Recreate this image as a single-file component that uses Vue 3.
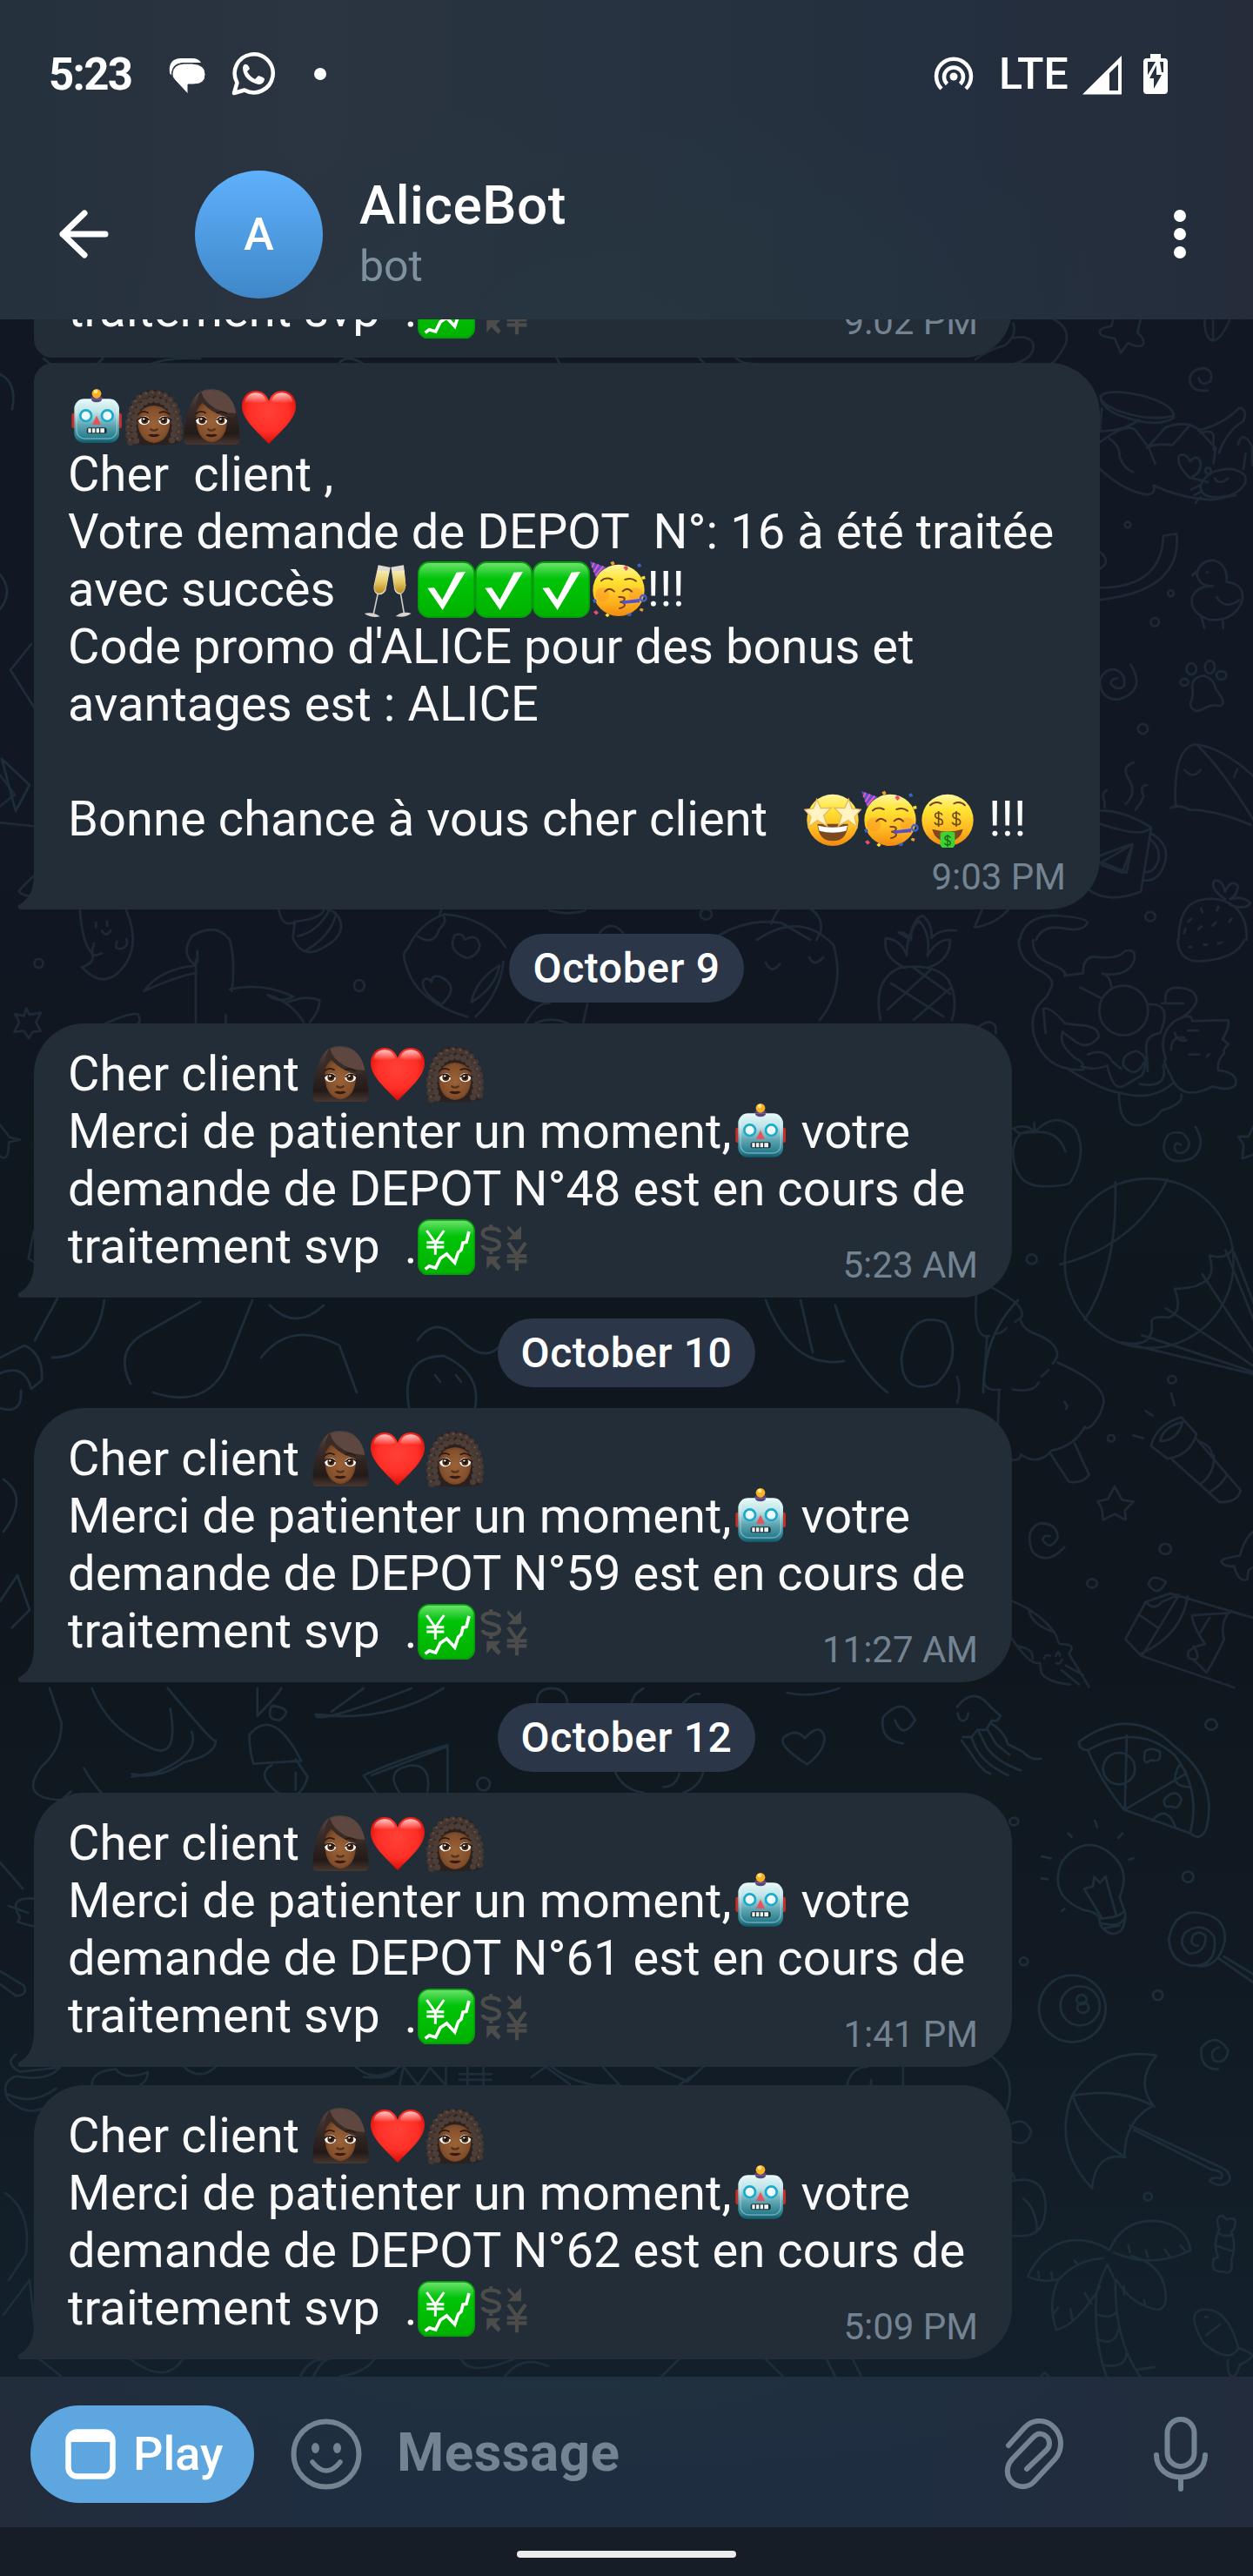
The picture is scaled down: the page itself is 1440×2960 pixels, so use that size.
<script setup>
const emojis = ['robot', 'curly', 'woman', 'heart', 'clink', 'check', 'party', 'star', 'money', 'chart', 'exchange']

// Splits "{name}" tokens out of a line so that they render as emoji glyphs.
const parse = (line) =>
  line
    .split(/(\{\w+\})/)
    .filter((part) => part !== '')
    .map((part) => {
      const name = part.slice(1, -1)
      return emojis.includes(name) ? { emoji: name } : { text: part }
    })

const waiting = (id, number, time, extra = {}) => ({
  id,
  kind: 'message',
  time,
  lines: [
    'Cher client {woman}{heart}{curly}',
    'Merci de patienter un moment,{robot} votre',
    `demande de DEPOT N°${number} est en cours de`,
    'traitement svp  .{chart}{exchange}'
  ].map(parse),
  ...extra
})

const items = [
  // Only the last line of this message is scrolled into view.
  {
    id: 1,
    kind: 'message',
    variant: 'first',
    time: '9:02 PM',
    lines: ['traitement svp  .{chart}{exchange}'].map(parse)
  },
  {
    id: 2,
    kind: 'message',
    variant: 'tall',
    time: '9:03 PM',
    lines: [
      '{robot}{curly}{woman}{heart}',
      'Cher  client ,',
      'Votre demande de DEPOT  N°: 16 à été traitée',
      'avec succès  {clink}{check}{check}{check}{party}!!!',
      "Code promo d'ALICE pour des bonus et",
      'avantages est : ALICE',
      ' ',
      'Bonne chance à vous cher client   {star}{party}{money} !!!'
    ].map(parse)
  },
  { id: 3, kind: 'date', label: 'October 9', variant: 'early' },
  waiting(4, 48, '5:23 AM'),
  { id: 5, kind: 'date', label: 'October 10' },
  waiting(6, 59, '11:27 AM'),
  { id: 7, kind: 'date', label: 'October 12' },
  waiting(8, 61, '1:41 PM'),
  waiting(9, 62, '5:09 PM', { variant: 'follow' })
]
</script>

<template>
  <div class="phone">
    <svg class="sprite" width="0" height="0" aria-hidden="true">
      <defs>
        <linearGradient id="g-green" x1="0" y1="0" x2="0" y2="1">
          <stop offset="0" stop-color="#6be36b" /><stop offset=".22" stop-color="#19c922" /><stop offset=".3" stop-color="#00c408" /><stop offset="1" stop-color="#00b200" />
        </linearGradient>
        <radialGradient id="g-heart" cx=".5" cy=".4" r=".62">
          <stop offset="0" stop-color="#ff4138" /><stop offset=".6" stop-color="#ff2f26" /><stop offset="1" stop-color="#d30a05" />
        </radialGradient>
        <linearGradient id="g-gloss" x1="0" y1="0" x2="0" y2="1">
          <stop offset="0" stop-color="#fff" stop-opacity=".75" /><stop offset="1" stop-color="#fff" stop-opacity="0" />
        </linearGradient>
        <linearGradient id="g-face" x1="0" y1="0" x2="0" y2="1">
          <stop offset="0" stop-color="#fff6a0" /><stop offset=".3" stop-color="#ffe433" /><stop offset=".7" stop-color="#ffb61f" /><stop offset="1" stop-color="#f08a10" />
        </linearGradient>
        <linearGradient id="g-robot" x1="0" y1="0" x2="0" y2="1">
          <stop offset="0" stop-color="#e4f8f8" /><stop offset=".3" stop-color="#bfe3e6" /><stop offset=".6" stop-color="#5fa5b1" /><stop offset=".9" stop-color="#237a8b" /><stop offset="1" stop-color="#115566" />
        </linearGradient>
        <linearGradient id="g-hair" x1="0" y1="0" x2="0" y2="1">
          <stop offset="0" stop-color="#5e4a43" /><stop offset=".35" stop-color="#3a2c29" /><stop offset=".8" stop-color="#231a18" /><stop offset="1" stop-color="#49372f" />
        </linearGradient>
        <radialGradient id="g-skin" cx=".5" cy=".5" r=".6">
          <stop offset="0" stop-color="#9a6238" /><stop offset=".7" stop-color="#84502c" /><stop offset="1" stop-color="#5f371d" />
        </radialGradient>
        <linearGradient id="g-wine" x1="0" y1="0" x2="0" y2="1">
          <stop offset="0" stop-color="#f5eebb" /><stop offset=".5" stop-color="#e6c964" /><stop offset="1" stop-color="#b88a1e" />
        </linearGradient>
      </defs>

      <symbol id="features" viewBox="0 0 198 198">
        <path d="M46 88q14-13 32-3M118 85q18-9 32 3" fill="none" stroke="#2b1913" stroke-width="5" stroke-linecap="round" />
        <ellipse cx="65" cy="112" rx="19" ry="15" fill="#fff" />
        <ellipse cx="134" cy="112" rx="19" ry="15" fill="#fff" />
        <circle cx="67" cy="111" r="12" fill="#4a2a14" /><circle cx="133" cy="111" r="12" fill="#4a2a14" />
        <circle cx="67" cy="111" r="6" fill="#170c07" /><circle cx="133" cy="111" r="6" fill="#170c07" />
        <circle cx="64" cy="106" r="3.5" fill="#fff" /><circle cx="130" cy="106" r="3.5" fill="#fff" />
        <path d="M45 108q17-17 38 2M116 110q20-19 38-2" fill="none" stroke="#1b100c" stroke-width="4" />
        <path d="M88 142q11 8 22 0" fill="none" stroke="#53301a" stroke-width="7" stroke-linecap="round" />
        <path d="M78 162q12-6 21-2q9-4 21 2q-21 14-42 0z" fill="#351a14" />
      </symbol>

      <symbol id="woman" viewBox="0 0 198 198">
        <path d="M98 4C150 4 172 38 184 82c9 34 12 62 13 92 0 16-6 21-20 21H22c-14 0-19-6-18-21C6 120 16 70 40 33 54 12 72 4 98 4z" fill="url(#g-hair)" />
        <path d="M46 92Q46 66 62 46Q112 90 152 98Q156 148 132 172Q100 200 68 172Q44 148 46 92z" fill="url(#g-skin)" />
        <path d="M60 14Q42 44 44 92Q50 66 68 50Q108 94 166 100Q184 100 184 82Q160 8 98 5Q76 5 60 14z" fill="#392b27" />
        <path d="M64 13Q72 46 112 70Q150 88 184 86Q172 12 98 5Q78 5 64 13z" fill="#674f47" opacity=".8" />
        <use href="#features" width="198" height="198" />
      </symbol>

      <symbol id="curly" viewBox="0 0 198 198">
        <path d="M98 5C150 5 185 40 190 110c2 30 6 60-2 76-20 14-160 14-176 0-10-20-6-50-4-76C12 40 50 5 98 5z" fill="#2b211e" />
        <g fill="none" stroke-linecap="round">
          <path d="M18 186Q4 140 18 92Q34 20 98 18Q162 20 180 92Q194 140 180 186" stroke="#453732" stroke-width="25" stroke-dasharray="0 23" />
          <path d="M38 182Q22 140 34 98Q48 42 98 40Q150 42 164 98Q176 140 160 182" stroke="#4c3d37" stroke-width="22" stroke-dasharray="0 21" />
          <path d="M15 178Q2 138 16 90Q32 16 98 14Q160 16 177 90Q192 138 178 178" stroke="#6d5c55" stroke-width="8" stroke-dasharray="0 23" opacity=".65" />
        </g>
        <path d="M44 100Q52 64 98 60Q146 64 154 100Q158 152 130 178Q98 200 68 178Q38 152 44 100z" fill="url(#g-skin)" />
        <use href="#features" width="198" height="198" />
      </symbol>

      <symbol id="heart" viewBox="0 0 198 198">
        <path d="M99 192C60 150 6 108 6 62 6 30 26 9 53 9c22 0 40 14 46 36 6-22 24-36 46-36 27 0 47 21 47 53 0 46-54 88-93 130z" fill="url(#g-heart)" />
        <path d="M16 50C18 28 34 16 54 16c18 0 34 12 36 30-24 8-52 8-74 4zM108 46c2-18 18-30 36-30 20 0 36 12 38 34-22 4-50 4-74-4z" fill="url(#g-gloss)" />
      </symbol>

      <symbol id="robot" viewBox="0 0 198 198">
        <rect x="13" y="86" width="14" height="52" rx="6" fill="#c52d28" /><rect x="172" y="86" width="14" height="52" rx="6" fill="#c52d28" />
        <path d="M78 38q0-14 21-14t21 14q0 12-21 12t-21-12z" fill="#594476" />
        <circle cx="99" cy="19" r="16" fill="#fdb022" /><circle cx="96" cy="12" r="7" fill="#ffe98a" />
        <rect x="22" y="37" width="155" height="152" rx="34" fill="url(#g-robot)" />
        <rect x="30" y="42" width="139" height="132" rx="28" fill="none" stroke="#fff" stroke-opacity=".35" stroke-width="4" />
        <path d="M80 37h38q-2 12-19 12t-19-12z" fill="#594476" />
        <circle cx="62" cy="95" r="19" fill="#effcff" stroke="#19a9cc" stroke-width="8" />
        <circle cx="136" cy="95" r="19" fill="#effcff" stroke="#19a9cc" stroke-width="8" />
        <path d="M99 95l15 31H84z" fill="#e5525b" />
        <rect x="65" y="136" width="69" height="21" rx="8" fill="#1f3036" />
        <path d="M70 139h10v15H70zM84 139h10v15H84zM98 139h10v15H98zM112 139h14v15h-14z" fill="#eef4f2" />
      </symbol>

      <symbol id="check" viewBox="0 0 198 198">
        <rect x="0" y="3" width="198" height="195" rx="40" fill="#069c0b" />
        <rect x="5" y="9" width="188" height="184" rx="35" fill="url(#g-green)" />
        <path d="M34 95l23-1 28 42 49-95 31-2-79 132z" fill="#fff" />
      </symbol>

      <symbol id="chart" viewBox="0 0 198 198">
        <rect x="0" y="6" width="198" height="195" rx="40" fill="#069c0b" />
        <rect x="5" y="11" width="188" height="182" rx="35" fill="url(#g-green)" />
        <path d="M31 45l30 42 30-42M61 86v42M31 86h60M31 102h60" fill="none" stroke="#fff" stroke-width="9" />
        <path d="M26 178l14-11 22 7 16-33 22-15 28 30 12-36 10-8 6-25 12-2 9-37" fill="none" stroke="#fff" stroke-width="11" stroke-linejoin="miter" />
      </symbol>

      <symbol id="exchange" viewBox="0 0 198 198">
        <g fill="#4c4c4b" stroke="#4c4c4b">
          <path d="M84 51Q82 38 54 38Q28 38 26 54Q26 68 54 74Q84 80 84 94Q82 112 54 111Q28 110 26 96M55 25v16M55 108v18" fill="none" stroke-width="13" />
          <path d="M113 28l24 23 22-22v47h-46l17-17-19-20zM40 134h48l-16 17 17 20-9 12-24-25-16 20z" stroke="none" />
          <path d="M114 87l30 42 30-42M144 124v60M110 133h68M110 151h68" fill="none" stroke-width="13" />
        </g>
      </symbol>

      <symbol id="clink" viewBox="0 0 198 198">
        <g fill="none" stroke="#cfcbc7" stroke-width="5" stroke-linecap="round">
          <path d="M60 118L45 188M140 118l12 70" />
        </g>
        <path d="M14 183q28-8 54 10q-30 6-54-10zM122 192q26-20 54-9q-22 16-54 9z" fill="#d9d4d0" />
        <path d="M62 16l42 8-16 80q-12 18-30 13q-14-10-11-31z" fill="#dedbd5" /><path d="M60 34l40 4-14 62q-12 18-28 12q-12-8-9-25z" fill="url(#g-wine)" />
        <path d="M106 23l44-7 7 70q-2 22-17 31q-16 0-22-15z" fill="#dedbd5" /><path d="M110 38l42-4 5 52q-3 20-17 27q-14-2-20-14z" fill="url(#g-wine)" />
      </symbol>

      <symbol id="party" viewBox="0 0 198 198">
        <circle cx="99" cy="103" r="89" fill="url(#g-face)" />
        <circle cx="43" cy="118" r="24" fill="#f98528" opacity=".35" /><circle cx="158" cy="118" r="24" fill="#f98528" opacity=".35" />
        <path d="M0 3l59 22q-25 9-38 35z" fill="#5d4fd0" /><path d="M14 8l-7 16M30 14L13 40M46 20L19 53" stroke="#e85bb5" stroke-width="6" />
        <path d="M39 70q15-14 38-4M121 66q22-8 38 5M52 107q14-18 32 0M113 106q16-15 31 1M100 126q24-2 18 12-10 6-15 5 22 2 15 15-7 7-16 7" fill="none" stroke="#75421c" stroke-width="6" stroke-linecap="round" />
        <path d="M106 140l66-8v13l-56 4z" fill="#5351cd" /><circle cx="184" cy="130" r="10" fill="none" stroke="#4361cf" stroke-width="7" />
        <g stroke-width="1"><path d="M70 7l11-5 5 10-10 5zM174 164l11 3-4 10-11-5z" fill="#ed9e34" /><path d="M115 24l10-6 8 9-9 9zM12 178l10-6 8 9-9 7z" fill="#e74c72" /><path d="M162 14l11-4 5 10-11 4zM9 136l10-3 5 9-10 6zM130 184l14-3-2 10-13 1z" fill="#3763c4" /><path d="M177 56l12-3 2 11-12 2zM52 188l7-6 9 6-8 8z" fill="#ffe03b" /></g>
      </symbol>

      <symbol id="star" viewBox="0 0 198 198">
        <circle cx="99" cy="103" r="89" fill="url(#g-face)" />
        <path d="M46 116h106q-4 59-53 59t-53-59z" fill="#7d4820" /><path d="M48 122q50 12 102 0l-5 18q-46 12-92 0z" fill="#fff" />
        <path d="M44 31l14 31 36-1-26 26 12 37-34-20-31 23 9-35-22-25 31-4z" fill="#fff3c3" stroke="#e9b85c" stroke-width="4" />
        <path d="M154 31l-14 31-36-1 26 26-12 37 34-20 31 23-9-35 22-25-31-4z" fill="#fff3c3" stroke="#e9b85c" stroke-width="4" />
      </symbol>

      <symbol id="money" viewBox="0 0 198 198">
        <circle cx="99" cy="103" r="89" fill="url(#g-face)" />
        <path d="M39 52q17-16 38-6M121 46q22-10 38 6" fill="none" stroke="#75421c" stroke-width="6" stroke-linecap="round" />
        <path d="M46 134q54 16 106 0q-10 42-53 42t-53-42z" fill="#7d4820" />
        <path d="M74 146q25-8 50 0v40q0 16-25 16t-25-16z" fill="#3dd332" />
        <g fill="none" stroke="#6d4a18" stroke-width="5">
          <path d="M81 86q-4-8-13-8-12 0-12 9 0 8 12 11 14 3 14 12 0 9-14 9-11 0-14-9M68 72v54" />
          <path d="M142 86q-4-8-13-8-12 0-12 9 0 8 12 11 14 3 14 12 0 9-14 9-11 0-14-9M129 72v54" />
          <path d="M109 164q-3-6-10-6-9 0-9 7 0 6 9 8 10 2 10 9 0 7-10 7-8 0-10-7M99 153v42" stroke="#1d6516" stroke-width="4" />
        </g>
      </symbol>
    </svg>

    <header class="header">
      <div class="status">
        <span class="clock">5:23</span>
        <svg class="s-chat" width="44" height="44" viewBox="0 0 44 44"><path d="M2 18Q0 2 14 1h14q7 0 10 5H17Q4 7 4 20q-1 0-2-2z" fill="#fff" /><path d="M18 7h10q15 1 15 12.500T29 31h-6v11L8 26Q4 22 5 18 6 8 18 7z" fill="#fff" stroke="#29343f" stroke-width="1" /></svg>
        <svg class="s-wa" width="50" height="50" viewBox="0 0 50 50"><path d="M3 47l3.500-12A22 22 0 1 1 15 43.500z" fill="none" stroke="#fff" stroke-width="4.500" stroke-linejoin="round" /><path d="M17 14q-3-1-4 4 1 15 18 19 6 0 7-6 0-2-7-4l-4 4q-6-3-9-9l3-3q-2-5-4-5z" fill="#fff" /></svg>
        <span class="s-dot"></span>
        <span class="grow"></span>
        <svg class="s-hot" width="46" height="40" viewBox="0 0 46 40"><circle cx="23" cy="23" r="4.500" fill="#fff" /><path d="M15.500 31.500a11 11 0 1 1 15 0M9 37a20 20 0 1 1 28 0" fill="none" stroke="#fff" stroke-width="4.500" /></svg>
        <span class="lte">LTE</span>
        <svg class="s-sig" width="45" height="45" viewBox="0 0 45 45"><path d="M0 44.500L45 0v44.500zM31 40h10V10L31 20z" fill="#fff" fill-rule="evenodd" /></svg>
        <svg class="s-bat" width="28" height="46" viewBox="0 0 28 46"><path d="M8 0h12v5h4q4 0 4 4v33q0 4-4 4H4q-4 0-4-4V9q0-4 4-4h4z" fill="#fff" /><path d="M5 9h9L5 24zM19 9h4v12h-2zM15 13v11h6l-9 16V28H7z" fill="#25303d" /></svg>
      </div>
      <div class="titlebar">
        <svg class="back" width="58" height="56" viewBox="0 0 58 56"><path d="M54 28H5M30 4L5 28l25 24" fill="none" stroke="#fff" stroke-width="7" stroke-linecap="round" stroke-linejoin="round" /></svg>
        <div class="avatar">A</div>
        <div class="who">
          <div class="name">AliceBot</div>
          <div class="sub">bot</div>
        </div>
        <div class="dots"><i></i><i></i><i></i></div>
      </div>
    </header>

    <main class="chat">
      <svg class="doodles" width="1440" height="2364" viewBox="0 367 1440 2364">
        <!-- stars, crab, chick, paw and mug beside the tall message -->
        <g transform="translate(720 0) scale(.4592 .3333)">
          <path d="M1068 1100q45 30 30 90-20 50-38 70M968 1115q10 40-20 75-50 20-75 50M968 1165q40-10 50 20 5 50-50 70M1218 1100l-4 25q-30 5-30 20t38 22l15 50 18-35q32 20 38 5t-14-40l8-50M1447 1102q0 70 22 72 20-5 40-70M1468 1175v-70" />
        </g>
        <g transform="translate(700 400) scale(.4719 .4337)">
          <path d="M1458 112q-38 6-44-25 0-32 35-34 25 8 15 35-20 15-28-8M1375 185q-45 30-140-10-48-30-35-50 20-18 95 0 85 25 80 60zM1372 180q-60 15-135-15-42-20-40-38M1200 160l-5 60q60 0 95-30M1195 250q60-50 85-35l35 50 15 42M1218 240q25 15 26 50 10 30 32 38M1310 265l45-55q50-20 80 5l42 50-5 40M1312 262q22-10 60-5l40-50M1195 320q60 60 115 68 22-2 16-24 70 35 140 38l60-12M1435 218q60-15 100-60 20 5 10 35-40 25-60 85M1440 225q35-12 32 15v30" />
          <path d="M1440 365q15-45 75-45 45 10 33 40-20 35-70 35-38 0-38-30zM1475 345q10 20 32 0M1415 345q-35-35-27-60 15-10 27 15 15-20 25 0 5 30-25 45zM1532 255q10-40 34 5v50M1418 375l20-12M1425 390l20-12M1440 395l-12 15M1420 345l38 10M1545 320l5-40M1270 468a7 8 0 1 1-14 0 7 8 0 1 1 14 0zM1466 325a7 8 0 1 1-14 0 7 8 0 1 1 14 0z" />
          <path d="M1195 540q30 25 0 45M1195 635q150 0 155-138l32-5q15 150-187 175M1375 650a7 8 0 1 1-14 0 7 8 0 1 1 14 0zM1339 726a10 11 0 1 1-20 0 10 11 0 1 1 20 0z" />
          <path d="M1420 602l12-8q10-32 40-32 35 10 32 58 45 5 38 50-20 55-80 50-50-20-42-60 12-30 50-30-40 0-38-40zM1480 660q20 35 55 8M1442 712l8 30M1495 722v20M1456 594h2" />
          <path d="M1270 838q40 70-30 93-45 0-45-50 10-30 35-30 30 10 24 44-15 15-32-5 0-15 15-15M1420 900q0-30 30-32 25 10 27 35 30 40 10 45-20-5-35 5-30 20-37-10 10-20 5-43zM1411 885a10 9 0 1 1-20 0 10 9 0 1 1 20 0zM1430 850a12 15 0 1 1-24 0 12 15 0 1 1 24 0zM1475 845a12 17 0 1 1-24 0 12 17 0 1 1 24 0zM1503 867a12 11 0 1 1-24 0 12 11 0 1 1 24 0zM1312 1009a12 13 0 1 1-24 0 12 13 0 1 1 24 0z" />
          <path d="M1380 1215q-8-150 45-165 70 5 160 100M1430 1050q60 60 145 210M1402 1118q20 25 38 0M1530 1115l-8 22M1368 1218q20-10 45 5 60 0 150 40M1278 1098q-30 10-15 40 25 40-5 70M1310 1158q-20 0-8 30-8 20-20 35M1212 1172q-15 5-5 30v15M1195 1225q60 0 125 45-20 30-125-10M1320 1275l-25 165q-80 35-130-8M1318 1285q50 30 35 80-15 50-50 45M1315 1300q30 20 22 60-10 30-30 28M1195 1365l80-50-15 75-60-28M1200 1370l50 20 25-75M1195 1345l75-30" />
          <path d="M1387 1568q0-90 50-105 50-15 90 20 30 35 25 85M1500 1460q-40-30-25-50 20 0 25 30 15-35 32-15-5 30-20 35 30-10 50 10-10 20-50 5M1410 1520l8-8M1445 1495l-4-10M1480 1490l4-10M1400 1550l4-12M1435 1540l8-8M1470 1530l8-8M1510 1520l6-8M1330 1506a12 12 0 1 1-24 0 12 12 0 1 1 24 0zM250 1500a14 14 0 1 1-28 0 14 14 0 1 1 28 0zM250 1568q80-60 170-45l70 45M395 1525q20-60 60-60 70 30 60 80l-10 23M735 1568l-30-20q20-2 30 20 0-50 28-65 25 20 22 60 20-25 60-20M890 1534l20-50M895 1534q50-10 80-50M1000 1568q10-60 80-65 85 5 85 20-10 25-60 14-50-10-65 31" />
        </g>
        <!-- pineapple and cow between the tall message and the next one -->
        <g>
          <path d="M1012 1172q-10-46 22-60 40-6 56 14 12 24 4 46M1024 1130l60 38M1050 1112l42 30M1020 1160l50-46M1050 1172l44-38M1040 1112q-26-12-22-34 18 2 24 20 0-26 14-40 14 14 10 40 12-20 26-18 0 24-26 32M870 1080q50-34 88 6 14 50-16 86M880 1106q6 14 16 2M930 1100q6 12 16 0" />
        </g>
        <!-- ghost, goose and balloon below the tall message -->
        <g transform="translate(0 840) scale(.4592 .4209)">
          <path d="M0 120l38 55M0 205l35-30M0 250l84 10M85 395q-20 20-38 42 10 15 38 14M200 487q5 90 30 120 10 25-25 38 60 70 110-10 35-60 0-148M255 545q10 20 22 0M240 535v-12M268 532v-12M235 580q-10 35 5 32l15-5M293 575q-10 25 15 18 15-10 8-25M698 490q10 50 40 30l-5 45q20 50 60 35 80-40 55-90-10-20-30-23M740 520q70-10 70-33M745 560q50-10 80-73M765 600q60-40 75-95" />
          <path d="M490 640q-40-30-10-80 60-40 95 10 15 60 5 140M490 640q-90 10-130 70 80-40 132-50M490 625v170M494 600v30M575 705q80-20 160 20-40 20-65-5M670 720q60 20 90 75M720 740q50-20 80-5 0 30-25 60M565 775v25M265 798q60-30 80-25 10 20 0 25M108 634a11 12 0 1 1-22 0 11 12 0 1 1 22 0zM912 695a13 15 0 1 1-26 0 13 15 0 1 1 26 0zM66 757l8 18 28-6-12 26 12 24-20 2-10 18-12-20-24 2 12-26-10-22 22 5z" />
          <path d="M1170 780q-130-40-155-145-10-30 5-40 25-65 90-95 110 10 155 90M1045 560q40 30 55-20 20-20 10-35M1168 620q-50-20-30-62 20-10 25 12 30-20 38 15-5 30-33 35zM1060 680q-10 30 45 67 50-50-5-77-20-5-20 15-10-15-20-5zM1180 740q10-60 70-100-10 60-70 100zM1190 780q60-60 70-150M1100 500l5-13M0 1075l25 35 25 5-28 8q0 60-25 35M85 1365l-14 75 14 10M1315 798q30-60 60-55M1340 798q40-20 80 0M1470 745l-10 50M1500 552q30-40 60 0M1375 490q45 15 90 0" />
        </g>
        <!-- cat, balloon, tree, torch -->
        <g transform="translate(1100 1080) scale(.3333 .5485)">
          <path d="M212 0q0 40 60 60 70 20 52 40-15 20-20 22-60 30-38 80 40 75 170 70 5-15-30-25-60-30-42-55M305 195l-8-50q20-8 75 30l70 5q50 5 45 25-35 25-75 10l-45-20M262 0q-5 35 60 50 60 15 48 25l65-5q-5-30 35-35 80 8 110-12 40-5 30 20-20 35-110 28M510 72q20 10 22 28M658 148a84 52 0 1 1-168 0 84 52 0 1 1 168 0zM425 100l72 22M385 272q120 45 175 48 110 20 185-20M558 322q0 70 70 66 50-5 75-30 80-15 70-34M655 135q90-5 45 60-50 5-48 30l5 50M720 250q-30-50 30-80 60-20 60 0l125-2q5 15-20 40l20 10-15 12 0 8q-25 15-20 35 70 5 60 30-15 15-80 4-110 35-145-25-20-20-20-30M720 133q-10-30 30-33 80 0 75 30-15 20-55 35M705 133h75M428 265q50 10 90-2 20 60 65 40l55-20q30-40-20-50-50 5-45 30 40 30 70-5M450 240q60-15 85 15l30 15M738 230q0-30 45-25M750 195q10 20 40 15M800 240h35M795 190h35M860 245l10-6M710 262q20 50-80 40" />
          <path d="M268 403q-70-10-76 45 10 70 105 68 90 0 95-10 60-60 15-110-70-40-139 7zM268 403q80-5 105 40M268 403q-30-20-75-8l20 10 55-2M265 383l3 20M822 392q40 40-10 65-90 20-100-22 5-40 65-30 40 20 10 38-30 10-38-8 5-15 22-5M1020 392l-15 20h-35l18 18-5 28 37-8" />
          <path d="M953 675c0 100-130 180-291 180S371 775 371 675 500 500 662 500s291 75 291 175zM545 508q10 180-105 288M355 680q260-40 370-178M565 843q120 15 105-45 5-10 60-7 50-10 20-60 70-2 85-10 60-10 35-60 60 10 80-15M637 828l400 80M720 772l300 120M845 700l180 165M925 650l100 150M955 655l70 110M565 843l460 67M760 0q5 45 75 45 130-5 155-45M800 15h8M850 10h12M900 8l12-3" />
          <path d="M66 745q-10 80 30 85h15M130 825q25 0 40-12M115 727q130 40 105 65l-20 8M220 798q5 15 40 25 90 20 85 50l-15 15M345 885q170 45 160 85-10 25-25 35-20 20-40 18M103 832l-10 90q0 25 55 20M192 942q70 8 90-15M290 915l25-14M145 945l-5 70M190 1090q30 0 30-12 60 25 105-8 80-10 115-50M320 1075l65 60q50 5 70-15l-50-65M370 968q15 10 5 15M275 669a18 10 0 1 1-36 0 18 10 0 1 1 36 0zM755 921a14 8 0 1 1-28 0 14 8 0 1 1 28 0zM543 1044a12 7 0 1 1-24 0 12 7 0 1 1 24 0zM738 1276a20 11 0 1 1-40 0 20 11 0 1 1 40 0zM482 1348a17 9 0 1 1-34 0 17 9 0 1 1 34 0zM0 915q15 25 0 55M75 182q40-20 58 0v14" />
          <path d="M668 1060q20-45 105-60l52 35q-20 45-100 52zM700 1050q10-30 78-40-20 40-78 40zM740 1088l165 90q65 0 72-25l-155-110M840 1140q50-25 45-60M875 1155q40-15 55-35M830 1050q50 10 48 30M738 950l12 25M650 987l25 10M607 1038l35 6" />
          <path d="M543 1145l25 28 40 4-30 18 3 20-38-12-40 12-3-22-15-17 35-5zM370 1272q-60 40-110 10-30-45 25-60 60 0 62 30-25 30-52 5 5-12 25-8M1020 1240q-30 15-45 50-60 5-65 12 10 12 45 10 15 35 45 28l5-20 15-5M190 1385q100 25 150 70 10 20 15 20 60 0 30 20l70 70M190 1465q60 55 95 50l5 20q20 20 100 25M245 1400q10 35 90 50M210 1480q55 5 50 25M360 1530l60 30M375 1520l60 20M300 1505q5-10 20-5M340 1500q10-15 15 0M342 1515q10 5 20-8M580 1465l70-78 85-18 300 54M580 1465l55 35 320 66M650 1387q30 20 55 0l60-15-125 125M795 1375q-20 80-160 120M630 1415l60 25M660 1350q10-25 60-5-30 35-60 5zM940 1410l-130 5q0 20 45 60-75 10-55 30 50 10 15-25M945 1405q-40 20-25 60-20 30-60 70-30-20-50-28M870 1420l-30 30" />
        </g>
        <!-- pizza, bulb, umbrella, palm -->
        <g class="low" transform="translate(1100 1900) scale(.3333 .5485)">
          <path d="M0 112q50-40 100-10 30 20 50 28-10 15-30 10l-20 20-30 0-20 15h-30M115 145q50 20 60 45l50 15q30 20 65 15M105 160l30 30 45 22M75 165l30 35q40 30 115 45M50 175q20 50 125 80M15 182l30 25q40 40 70 45M38 125a18 16 0 1 1-36 0" />
          <path d="M420 185q180-80 330 10 150 70 110 170-20 30-55 12l-230-50q-80-60-125-125-30 0-30-17zM450 203q170-60 300 10 90 70 55 160M585 172l-7 155 210-75M613 241a55 33 0 1 1-110 0 55 33 0 1 1 110 0zM790 250q-20-20-25-15-40 45 40 45M672 350q50-35 80 12M648 205q20-10 50 0 10 25-30 18-30 15-20-18zM715 305q40-25 58 0-10 25-35 15-30 5-23-15zM896 149a20 11 0 1 1-40 0 20 11 0 1 1 40 0zM815 468a19 11 0 1 1-38 0 19 11 0 1 1 38 0zM211 352a15 8 0 1 1-30 0 15 8 0 1 1 30 0zM244 645a14 8 0 1 1-28 0 14 8 0 1 1 28 0zM709 716a17 10 0 1 1-34 0 17 10 0 1 1 34 0zM672 1138a14 8 0 1 1-28 0 14 8 0 1 1 28 0z" />
          <path d="M490 555q-10-15-50-17-130-30-78-103 80-60 168-15 70 35 30 90l20 35q0 45-50 42-40-10-40-32zM490 555q70 0 88-17M497 565q60 10 80-10M510 575l50-5M500 555l-62-62 30-5 5-20 20 12 18-13 38 82M475 350l8 14M383 377l12 7M570 377l-14 9M292 425l32 4M290 471l22 2M593 432l14-3M360 540l10-5" />
          <path d="M830 612q-30 0-18-20 20-15 45 0 0 35-55 37-45-20-15-45 60-25 100 10 10 55-60 60-90 0-97-55 15-55 90-57 110 5 103 60-20 55-90 53M905 640l130 55M920 635l110 40M512 744a115 70 0 1 1-230 0 115 70 0 1 1 230 0zM492 738a68 41 0 1 1-136 0 68 41 0 1 1 136 0zM446 725a17 10 0 1 1-34 0 17 10 0 1 1 34 0zM454 742a20 11 0 1 1-40 0 20 11 0 1 1 40 0zM900 871q-65 0-58-45 50-35 92 5-5 30-48 22-20-20 15-28" />
          <path d="M395 927q110-105 292-85-75 55-10 105-100 30-100 108-100-10-112 65-135-85-70-193zM395 927q160-20 285 22M400 930q50 80 180 125M595 988l310 87q40 10 35 28-25 20-70 2 10-10 40-5 15-15-30-18l-270-84" />
          <path d="M120 845q90 40 50 112M190 985q40-15 65 15-10 35-65 22M190 1105q110-15 115 50 0 65-80 65h-35M228 1142q45 20 48 68M190 1088l8 12" />
          <path d="M525 1250q-60-25-140-20-90 10-142 75 50 15 110 5 60-40 150-43M350 1310q-40 50-8 107 70-10 150-90M525 1250q50-70 175-60 90 10 105 60-130 40-265 5M600 1262q120 20 120 90-5 30-50 20-80-15-120-60M480 1340q20-40 38-60l28 35q-5 120 85 200M480 1340q-10 100 35 175M485 1385q40 10 65-5M482 1435q60 20 75-20M500 1490q80 10 85-25M620 1500l60-5M280 1295l3 12M325 1297l3 14M405 1272l12 8M330 1385l18-15M390 1372l8 26M440 1340l22 22M590 1240l6 14M650 1250l8 14M715 1248l18 15M770 1240l20 14M575 1325v18M645 1355l4 12" />
          <path d="M900 1200q-10-22 15-22l15 8q40-10 25 18l-10 8q20 30 0 58 10 35-30 25-45 0-30-25-10-2 15-5-20-30 5-60zM900 1213q20 12 50 4M890 1240l60 12M970 1455q-30 35-120-10-60-60-10-70 90-10 130 80 30 5 50 15-10 10-45 20-20 40-40 15-5-20 0-25M858 1428l48-22M855 1390h8M290 1515q10-15 25 0" />
        </g>
        <!-- left edge and gaps between the short messages -->
        <g class="low" transform="translate(0 1940) scale(.9184 .3333)">
          <path d="M62 0l15 120q0 90-25 150-30 110 25 115l12-30M105 275q10 50 22 85M115 0q20 140 70 200 40 60 28-130M210 0q60 200 60 180 0 50-40 75-30 60-65 40M240 150q10 80-45 140l-30 15M322 0v95q25-70 30-95M340 60q30 10 10 50-18 0-10-50zM395 90q-2 40 120-90M395 90q90 30 160-90M415 80q20-40 40-80M312 160q30-100 65 90l-60 10q-5-50-5-100zM340 265q-20 30 5 90 30 50 40-50l-15-60M370 290v60M455 300q50-60 105-105v165M455 300l15 60M465 300l95-100M500 360q-20-80 15-95 25 0 20 90M613 330a8 22 0 1 1-16 0 8 22 0 1 1 16 0zM672 50q0-50 18-50t20 50M790 50l5-30 10-20M855 50q15-40 20-30M985 15q30 20 65-15M1010 262q-40-70-28-95 15-30 25 5 20-60 25 0-2 50-22 90zM1130 190q-30-10-25-90 25-80 40 10-15 70-25 0M770 290q10 60 35 70M880 290q-5 50-25 70M830 340q15 0 20-45" />
          <path d="M42 725q-30-5-20 50 5 15 0 30 10 10 20 15M0 975l30 50q5 35-10 35l-20-40M20 1262q-15 30 5 60l50-15q-15 50-55 30-20 20-10 80 30 80 60 0M10 1400q30 40 60-20M115 1368q0-50 30-55 10 40 40 10 0 30-10 45M230 1305q20 50 40 0M445 1305q25 60 55 0M455 1340q30 10 40-20M500 1368l5-63 18 63 15-60 20 60v-63M585 1305v60M605 1305v60M575 1330h40M575 1350h40M665 1340l18-35 30 60M690 1305q40 80 85 62l-20-60M820 1305l40 50 20-50M850 1368l15-30M1060 1368q5-60 25-63M1090 1350v16M1130 1305v60" />
        </g>
        <g class="low">
          <path d="M0 1560l28-14q22 10 20 40l-12 10q-8-30-36-18M0 1618q26 8 24-20M40 1540l26-48M60 1560q50 0 60-66M150 1590q-20-40 20-60l60-34M176 1600q60 20 84-30l30-76M300 1560q34-44 90-14l20 54M310 1500q30 30 62 0M480 1540q20-30 50 0t50 0M470 1618q-10-60 40-60 44 20 36 60M500 1580l6 8M524 1580l6 8M880 1494q30 80 90 70M920 1494l14 60M960 1500q20 70 60 100M1036 1560q10-56 50-40 22 40-10 70-40 14-40-30zM1130 1600q0-66 40-106M4 1700q30 20 0 60M0 1840l20-30 14 40-20 20M10 2190l22 8M0 2140l26 30M6 2520q30 20 24 70l-20 30M4 2660l30-40 10 90 26 20M0 660q16 20 0 40M0 430q20 10 14 40M36 740l-24 30 28 44M2 872l32 30-16 30-16-60M150 2711q40 30 60 0M345 2731q10-20 26-20M360 2731q10-20 18-20M390 2731q30-5 40-20M530 2711q10 20 60 0M580 2731q20-26 50-12M760 2731l20-20M880 2711l20 20M950 2711l10 20M980 2711l10 20" />
          <path d="M50 412l10 8M118 412l-6 6M170 420q20-10 60-8M390 417q8-10 26 0M640 412q4 6 2 6M804 412l6 6M846 412q8 6 18 6" />
        </g>
      </svg>

      <template v-for="item in items" :key="item.id">
        <div v-if="item.kind === 'date'" class="date" :class="item.variant">{{ item.label }}</div>
        <article v-else class="bubble" :class="item.variant">
          <svg v-if="item.variant !== 'first'" class="tail" width="20" height="40" viewBox="0 0 20 40"><path d="M20 0v40H3q-3-1-2-5Q19 26 19 0z" fill="#222d38" /></svg>
          <p v-for="(line, i) in item.lines" :key="i" class="line">
            <template v-for="(part, j) in line" :key="j"><svg v-if="part.emoji" class="emoji" viewBox="0 0 198 198"><use :href="'#' + part.emoji" width="198" height="198" /></svg><span v-else>{{ part.text }}</span></template>
          </p>
          <time class="time">{{ item.time }}</time>
        </article>
      </template>
    </main>

    <footer class="composer">
      <button class="play" type="button">
        <svg width="58" height="58" viewBox="0 0 58 58"><rect x="3.500" y="3.500" width="51" height="51" rx="10" fill="none" stroke="#fff" stroke-width="6.500" /><path d="M4 15V10q0-7 7-7h36q7 0 7 7v5z" fill="#fff" /></svg>
        <span>Play</span>
      </button>
      <svg class="smile" width="82" height="82" viewBox="0 0 82 82"><circle cx="41" cy="41" r="37.500" fill="none" stroke="#748392" stroke-width="6" /><ellipse cx="28.500" cy="34" rx="4.500" ry="6" fill="#748392" /><ellipse cx="53.500" cy="34" rx="4.500" ry="6" fill="#748392" /><path d="M25 50q16 20 32 0" fill="none" stroke="#748392" stroke-width="5.500" stroke-linecap="round" /></svg>
      <span class="placeholder">Message</span>
      <svg class="clip" width="70" height="82" viewBox="0 0 70 82"><path d="M5 31L23 11C34-1 50 1 59 12c8 10 8 24 0 34L34 73c-7 7-18 7-25 0s-7-18 0-26L34 21c5-5 11-4 15 0s4 11 0 15L26 58" fill="none" stroke="#748392" stroke-width="6" stroke-linecap="round" /></svg>
      <svg class="mic" width="64" height="88" viewBox="0 0 64 88"><rect x="16.500" y="4" width="31" height="54" rx="15.500" fill="none" stroke="#748392" stroke-width="6" /><path d="M4 45c0 34 56 34 56 0M32 72v12" fill="none" stroke="#748392" stroke-width="6" stroke-linecap="round" /></svg>
    </footer>
    <div class="nav"><span></span></div>
  </div>
</template>

<style>
body {
  background: #171d27;
}
</style>

<style scoped>
.phone {
  display: flex;
  flex-direction: column;
  width: 1440px;
  height: 2960px;
  overflow: hidden;
  font-family: Roboto, 'Liberation Sans', sans-serif;
  color: #fafafb;
  background: #171d27;
}
.sprite {
  position: absolute;
}

.header {
  flex: none;
  height: 367px;
  background:
    radial-gradient(600px 260px at 50% 100%, rgba(38, 54, 64, 0.7), transparent),
    linear-gradient(90deg, #26313e 0, #2b3441 25%, #273340 48%, #242f3f 75%, #252d3b 100%);
}
.status {
  display: flex;
  align-items: center;
  height: 170px;
  padding: 0 98px 0 56px;
  box-sizing: border-box;
  color: #fff;
}
.clock {
  width: 135px;
  font-size: 51px;
  font-weight: 700;
  letter-spacing: -1.7px;
}
.s-chat {
  margin: 5px 29px 0 2px;
}
.s-wa {
  margin-right: 45px;
}
.s-dot {
  width: 14px;
  height: 14px;
  border-radius: 50%;
  background: #fff;
}
.grow {
  flex: 1;
}
.s-hot {
  margin-right: 29px;
}
.lte {
  width: 96px;
  font-size: 50px;
  font-weight: 500;
}
.s-sig {
  margin: 3px 25px 0 0;
}
.titlebar {
  display: flex;
  align-items: center;
  height: 198px;
  padding: 0 77px 0 67px;
}
.back {
  margin-right: 99px;
}
.avatar {
  width: 147px;
  height: 147px;
  border-radius: 50%;
  background: linear-gradient(#5fb0fc, #3f87c8);
  color: #fff;
  font-size: 52px;
  font-weight: 500;
  line-height: 147px;
  text-align: center;
}
.who {
  flex: 1;
  margin-left: 42px;
}
.name {
  margin-top: -4px;
  font-size: 62px;
  font-weight: 500;
  line-height: 74px;
  letter-spacing: 0.6px;
  color: #fff;
}
.sub {
  margin-top: 3px;
  font-size: 50px;
  line-height: 60px;
  color: #7f919e;
}
.dots {
  display: flex;
  flex-direction: column;
  gap: 7px;
}
.dots i {
  width: 14px;
  height: 14px;
  border-radius: 50%;
  background: #fff;
}

.chat {
  position: relative;
  flex: none;
  display: flex;
  flex-direction: column;
  justify-content: flex-end;
  align-items: flex-start;
  height: 2364px;
  box-sizing: border-box;
  padding: 0 0 20px 39px;
  overflow: hidden;
  background: linear-gradient(#111723 0, #111723 26%, #0f171f 40%, #0f161d 62%, #111a23 80%, #13202b 100%);
}
.doodles {
  position: absolute;
  left: 0;
  top: 0;
  fill: none;
  stroke: #1e2936;
  stroke-width: 2.8;
  stroke-linecap: round;
  stroke-linejoin: round;
}
.doodles path {
  vector-effect: non-scaling-stroke;
}
.doodles .low {
  stroke: #1d2d39;
}

.bubble {
  position: relative;
  flex: none;
  width: 1124px;
  height: 315px;
  box-sizing: border-box;
  padding: 25px 0 0 39px;
  border-radius: 58px 58px 58px 0;
  background: #222d38;
}
.bubble.first {
  height: 111px;
  padding-top: 23px;
  border-radius: 0 58px 58px 22px;
}
.bubble.tall {
  width: 1225px;
  height: 628px;
  margin-top: 6px;
  padding-top: 29px;
  border-top-left-radius: 22px;
}
.bubble.follow {
  margin-top: 21px;
}
.tail {
  position: absolute;
  left: -19px;
  bottom: 0;
}
.line {
  height: 66px;
  margin: 0;
  font-size: 56px;
  line-height: 66px;
  letter-spacing: 0.08px;
  white-space: pre;
  display: flex;
}
.emoji {
  flex: none;
  width: 66px;
  height: 66px;
  overflow: visible;
}
.time {
  position: absolute;
  right: 39px;
  bottom: 12px;
  font-size: 42px;
  line-height: 50px;
  color: #748391;
}
.first .time {
  bottom: 16px;
}

.date {
  position: relative;
  flex: none;
  align-self: center;
  height: 79px;
  margin: 24px 39px 24px 0;
  padding: 0 27px;
  border-radius: 40px;
  background: #2b3748;
  color: #fff;
  font-size: 48px;
  font-weight: 500;
  line-height: 79px;
  letter-spacing: 0.6px;
}
.date.early {
  margin-top: 28px;
}

.composer {
  flex: none;
  display: flex;
  align-items: center;
  height: 173px;
  box-sizing: border-box;
  padding: 5px 51px 0 35px;
  background:
    radial-gradient(700px 120px at 45% 0, rgba(32, 50, 62, 0.8), transparent),
    linear-gradient(90deg, #222c3b 0, #1f2d40 25%, #1f2d41 70%, #222c3c 100%);
}
.play {
  display: flex;
  align-items: center;
  width: 257px;
  height: 112px;
  margin: 0 42px 0 0;
  padding: 0 0 0 40px;
  box-sizing: border-box;
  border: 0;
  border-radius: 56px;
  background: #5ea6df;
  color: #fff;
  font: 500 54px/1 Roboto, 'Liberation Sans', sans-serif;
}
.play span {
  margin-left: 20px;
}
.placeholder {
  flex: 1;
  margin: -5px 0 0 40px;
  font-size: 62px;
  font-weight: 700;
  letter-spacing: 0.4px;
  color: #748392;
}
.mic {
  margin-left: 101px;
}
.nav {
  flex: 1;
  display: flex;
  justify-content: center;
  padding-top: 27px;
}
.nav span {
  width: 252px;
  height: 8px;
  border-radius: 4px;
  background: #ececec;
}
</style>
